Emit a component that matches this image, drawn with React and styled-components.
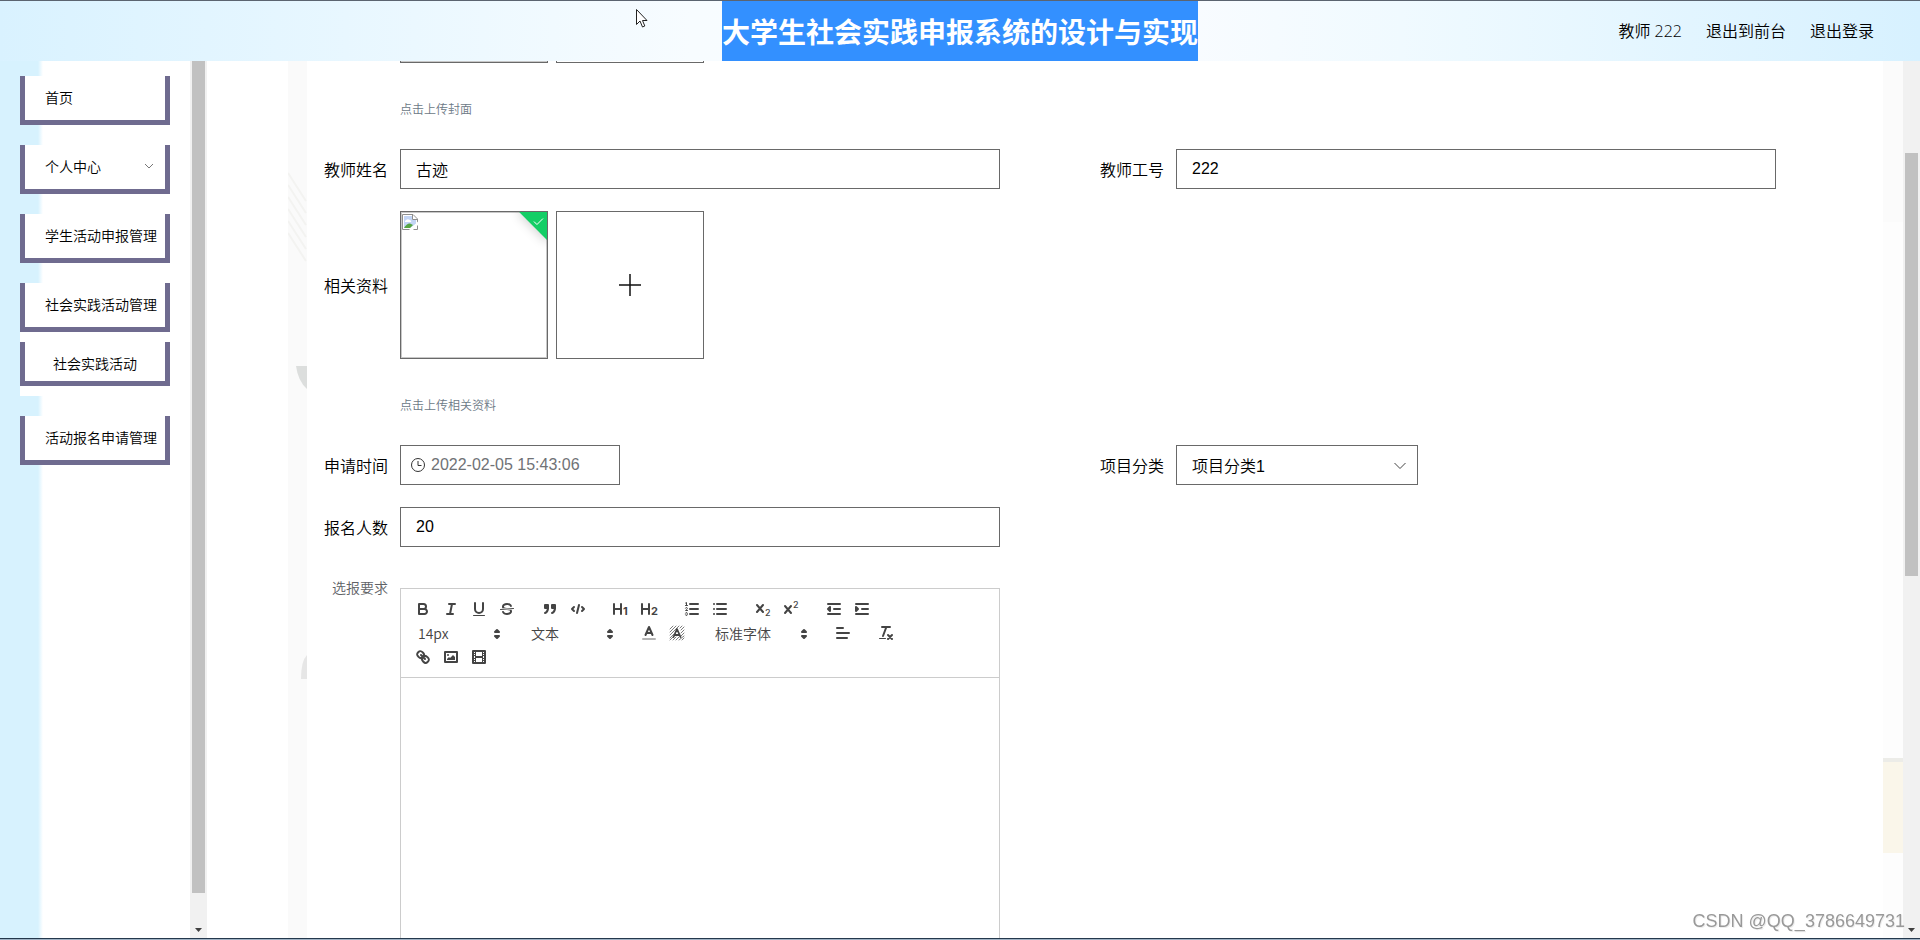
import React from 'react';
import styled, { createGlobalStyle, css } from 'styled-components';

const Global = createGlobalStyle`
  *, *::before, *::after { box-sizing: border-box; }
  body {
    margin: 0;
    background: #fff;
    color: #000;
    font-family: "Noto Sans CJK SC", "Liberation Sans", sans-serif;
    font-weight: 350;
  }
  button, input, select { font: inherit; color: inherit; }
`;

const Shell = styled.div`
  height: 100vh;
  display: flex;
  flex-direction: column;
  overflow: hidden;
  border-top: 1px solid #5b6470;
`;

const Header = styled.header`
  flex: none;
  height: 60px;
  display: grid;
  grid-template-columns: 1fr auto 1fr;
  align-items: center;
  background: linear-gradient(90deg, #d9f2ff 0%, #f7fcff 36%, #fafcff 60%, #f0faff 73%, #d7f1ff 100%);
`;

const Title = styled.h1`
  grid-column: 2;
  margin: 0;
  background: #3390ff;
  color: #fff;
  font-size: 28px;
  font-weight: 700;
  line-height: 60px;
  white-space: nowrap;
`;

const UserNav = styled.nav`
  display: flex;
  justify-content: flex-end;
  gap: 24px;
  padding-right: 46px;
  font-family: "Open Sans", "Noto Sans CJK SC", sans-serif;
  font-size: 16px;
  line-height: 60px;
  white-space: nowrap;
`;

const NavLink = styled.a`
  color: #000;
  text-decoration: none;
`;

const Body = styled.div`
  flex: 1;
  min-height: 0;
  display: flex;
`;

const Sidebar = styled.nav`
  flex: none;
  width: 190px;
  padding: 15px 20px;
  background: linear-gradient(90deg, #d7f2fe 0, #d7f2fe 38px, #fff 43px);
`;

const MenuList = styled.ul`
  list-style: none;
  margin: 0;
  padding: 0;
`;

const MenuItem = styled.li`
  margin-bottom: 20px;
  background: #fff;
`;

const frame = css`
  width: 150px;
  border: 5px solid #6f6b8f;
  border-top: 0;
  background: #fff;
  color: #000;
  font-size: 14px;
  text-decoration: none;
  white-space: nowrap;
`;

const MenuLink = styled.a`
  ${frame}
  display: flex;
  align-items: center;
  justify-content: space-between;
  height: 49px;
  padding: 0 10px 2px 20px;
`;

const SubMenu = styled.ul`
  list-style: none;
  margin: 0;
  padding: 10px 0;
`;

const SubLink = styled.a`
  ${frame}
  display: block;
  height: 44px;
  padding-left: 28px;
  line-height: 42px;
`;

const ScrollTrack = styled.div`
  flex: none;
  width: 17px;
  padding: 0 2px;
  display: flex;
  flex-direction: column;
  background: #f1f1f1;
`;

const ScrollGap = styled.div`
  flex: ${(p) => p.$size} 0 0;
`;

const ScrollThumb = styled.div`
  flex: ${(p) => p.$size} 0 0;
  background: #c1c1c1;
`;

const ScrollArrow = styled.svg`
  flex: none;
  width: 13px;
  height: 17px;
  fill: #404040;
`;

const Main = styled.main`
  flex: 1;
  min-width: 0;
  overflow: hidden;
  padding-left: 81px;
  display: flex;
`;

const Backdrop = styled.svg`
  flex: none;
  width: ${(p) => p.$width}px;
  height: 878px;
`;

const Form = styled.form`
  flex: 1;
  min-width: 0;
  padding: 0 11px 0 13px;
  display: grid;
  grid-template-columns: 1fr 1fr;
  align-content: start;
  row-gap: 22px;
  overflow: hidden;
`;

const Field = styled.div`
  grid-column: ${(p) => (p.$wide ? '1 / -1' : 'auto')};
  display: flex;
  align-items: flex-start;
`;

const Label = styled.label`
  flex: none;
  width: 80px;
  padding-right: 12px;
  text-align: right;
  white-space: nowrap;
  font-size: ${(p) => (p.$muted ? 14 : 16)}px;
  line-height: ${(p) => p.$line || 40}px;
  color: ${(p) => (p.$muted ? '#606266' : '#000')};
`;

const controlBox = css`
  height: 40px;
  border: 1px solid #696969;
  border-radius: 0;
  background: #fff;
  font-family: "Liberation Sans", "Noto Sans CJK SC", sans-serif;
  font-size: 16px;
  outline: 0;
`;

const TextInput = styled.input`
  ${controlBox}
  width: 600px;
  padding: 0 15px;
`;

const DateBox = styled.div`
  ${controlBox}
  width: 220px;
  display: flex;
  align-items: center;
  gap: 5px;
  padding-left: 10px;
  color: #707276;
`;

const DateInput = styled.input`
  flex: 1;
  min-width: 0;
  padding: 0;
  border: 0;
  outline: 0;
  background: none;
`;

const SelectBox = styled.div`
  ${controlBox}
  width: 242px;
  display: grid;
  align-items: center;
`;

const Select = styled.select`
  grid-area: 1 / 1;
  appearance: none;
  width: 100%;
  height: 38px;
  padding: 2px 30px 0 15px;
  border: 0;
  outline: 0;
  background: none;
`;

const SelectArrow = styled.svg`
  grid-area: 1 / 1;
  justify-self: end;
  margin-right: 10px;
  pointer-events: none;
`;

const Tiles = styled.div`
  display: flex;
  gap: 8px;
`;

const ScrolledTiles = styled(Tiles)`
  height: 2px;
  align-items: flex-end;
  overflow: hidden;
`;

const Tile = styled.div`
  flex: none;
  position: relative;
  width: 148px;
  height: 148px;
  padding: 2px 1px;
  border: 1px solid #696969;
  box-shadow: inset 0 0 0 1px #c8c8c8;
  background: #fff;
  overflow: hidden;
`;

const AddTile = styled.button`
  flex: none;
  width: 148px;
  height: 148px;
  padding: 0;
  display: flex;
  align-items: center;
  justify-content: center;
  border: 1px solid #696969;
  background: #fff;
`;

const DoneFlag = styled.span`
  position: absolute;
  top: -6px;
  right: -15px;
  width: 40px;
  height: 24px;
  display: flex;
  justify-content: center;
  padding-top: 11px;
  background: #13ce66;
  box-shadow: 0 0 12px 1px rgba(0, 0, 0, 0.2);
  transform: rotate(45deg);
  svg { transform: rotate(-45deg); }
`;

const Hint = styled.p`
  margin: 28px 0 0;
  color: #6c7986;
  font-size: 12px;
  line-height: 36px;
`;

const Editor = styled.div`
  width: 600px;
  margin-top: 19px;
  border: 1px solid #ccc;
`;

const Toolbar = styled.div`
  display: flex;
  flex-wrap: wrap;
  padding: 8px;
  border-bottom: 1px solid #ccc;
  color: #444;
`;

const Group = styled.span`
  display: flex;
  height: 24px;
  margin-right: 15px;
`;

const Tool = styled.button`
  width: 28px;
  height: 24px;
  padding: 3px 5px;
  border: 0;
  background: none;
  svg { display: block; }
`;

const Picker = styled.span`
  display: grid;
  align-items: center;
  width: ${(p) => p.$width}px;
`;

const PickerSelect = styled.select`
  grid-area: 1 / 1;
  appearance: none;
  width: 100%;
  height: 24px;
  padding: 0 20px 0 9px;
  border: 0;
  outline: 0;
  background: none;
  font-size: 14px;
`;

const PickerArrow = styled.span`
  grid-area: 1 / 1;
  justify-self: end;
  height: 18px;
  margin-right: 1px;
  pointer-events: none;
`;

const EditArea = styled.div`
  min-height: 400px;
  outline: 0;
`;

const BottomEdge = styled.footer`
  flex: none;
  height: 2px;
  border-top: 1px solid #24384c;
  background: #9fb2c4;
`;

const Watermark = styled.div`
  position: fixed;
  right: 15px;
  bottom: 7px;
  color: #999;
  font-family: "Liberation Sans", sans-serif;
  font-size: 18px;
  font-weight: 400;
  line-height: 24px;
  text-shadow: 1px 1px 0 #eee;
`;

const Cursor = styled.svg`
  position: fixed;
  top: 8px;
  left: 635px;
`;

const Ico = ({ children }) => (
  <svg width="18" height="18" viewBox="0 0 18 18" fill="none" stroke="#444" strokeWidth="2" strokeLinecap="round" strokeLinejoin="round" aria-hidden="true">
    {children}
  </svg>
);
const solid = { fill: '#444', stroke: 'none' };
const glyph = { ...solid, fontFamily: 'Inter, sans-serif', fontWeight: 700 };

const ICONS = {
  bold: <><path d="M5,4H9.5A2.5,2.5,0,0,1,12,6.5v0A2.5,2.5,0,0,1,9.5,9H5V4Z" /><path d="M5,9h5.5A2.5,2.5,0,0,1,13,11.5v0A2.5,2.5,0,0,1,10.5,14H5V9Z" /></>,
  italic: <path d="M7,4H13M5,14H11M8,14L10,4" />,
  underline: <><path d="M5,3V9a4,4,0,0,0,8,0V3" /><rect x="3" y="15" width="12" height="1" rx="0.5" {...solid} /></>,
  strike: <><path d="M15.5,8.5L2.5,9.5" strokeWidth="1" /><path {...solid} d="M9.007,8C6.542,7.791,6,7.519,6,6.5,6,5.792,7.283,5,9,5c1.571,0,2.765.679,2.969,1.309a1,1,0,0,0,1.9-.617C13.356,4.106,11.354,3,9,3,6.2,3,4,4.538,4,6.5a3.2,3.2,0,0,0,.5,1.843Z" /><path {...solid} d="M8.984,10C11.457,10.208,12,10.479,12,11.5c0,.708-1.283,1.5-3,1.5-1.571,0-2.765-.679-2.969-1.309a1,1,0,1,0-1.9.617C4.644,13.894,6.646,15,9,15c2.8,0,5-1.538,5-3.5a3.2,3.2,0,0,0-.5-1.843Z" /></>,
  quote: <><rect x="4" y="5" width="3" height="3" fill="#444" /><rect x="11" y="5" width="3" height="3" fill="#444" /><path fill="#444" d="M7,8c0,4.031-3,5-3,5" /><path fill="#444" d="M14,8c0,4.031-3,5-3,5" /></>,
  code: <path d="M5,7L3,9L5,11M13,7L15,9L13,11M10,5L8,13" />,
  h1: <><path d="M2,4V14M9,4V14M2,9H9" /><text x="11" y="15" fontSize="11" {...glyph}>1</text></>,
  h2: <><path d="M2,4V14M9,4V14M2,9H9" /><text x="11" y="15" fontSize="11" {...glyph}>2</text></>,
  ordered: <><path d="M7,4H15M7,9H15M7,14H15" /><path strokeWidth="1" d="M2.5,5.5H4.5M3.5,5.5V2.5L2.6,3M4.5,10.5h-2c0-.234,1.85-1.076,1.85-2.234A0.959,0.959,0,0,0,2.5,8.156M2.5,14.846a0.959,0.959,0,0,0,1.85-.109A0.7,0.7,0,0,0,3.75,14a0.688,0.688,0,0,0,.6-0.736,0.959,0.959,0,0,0-1.85-.109" /></>,
  bullet: <path d="M6,4H15M6,9H15M6,14H15M3,4H3.01M3,9H3.01M3,14H3.01" />,
  sub: <><path d="M3,5L9,12M9,5L3,12" /><text x="11" y="16" fontSize="9" {...glyph} fontWeight="500">2</text></>,
  sup: <><path d="M3,6L9,13M9,6L3,13" /><text x="11" y="8" fontSize="9" {...glyph} fontWeight="500">2</text></>,
  outdent: <><path d="M3,14H15M3,4H15M9,9H15" /><path fill="#444" d="M5,7V11L3,9Z" /></>,
  indent: <><path d="M3,14H15M3,4H15M9,9H15" /><path fill="#444" d="M3,7V11L5,9Z" /></>,
  color: <><path d="M3,15H15" opacity="0.4" /><path d="M5.5,11L9,3L12.5,11M6.4,9H11.6" /></>,
  background: <><path strokeWidth="0.7" d="M2,5L5,2M2,8L8,2M2,11L11,2M2,14L6,10M12,4L14,2M2,16L6,12M13,6L16,3M5,16L8,13M13,9L16,6M8,16L11,13M13,12L16,9M11,16L16,12M14,16L16,14" /><path strokeWidth="1.8" d="M5.5,13L9,5L12.5,13M6.4,11H11.6" /></>,
  align: <path d="M3,9H15M3,14H13M3,4H9" />,
  clean: <><path d="M5,3H13M6,12L9.35,3M11,11L15,15M15,11L11,15" /><rect x="2" y="14" width="7" height="1" rx="0.5" {...solid} /></>,
  link: <path d="M7,7L11,11M8.9,4.577a3.476,3.476,0,0,1,.36,4.679A3.476,3.476,0,0,1,4.577,8.9C3.185,7.5,2.035,6.4,4.217,4.217S7.5,3.185,8.9,4.577ZM13.423,9.1a3.476,3.476,0,0,0-4.679-.36,3.476,3.476,0,0,0,.36,4.679c1.392,1.392,2.5,2.542,4.679.36S14.815,10.5,13.423,9.1Z" />,
  image: <><rect x="3" y="4" width="12" height="10" /><circle cx="6" cy="7" r="1" {...solid} /><polygon {...solid} points="5 12 5 11 7 9 8 10 11 7 13 9 13 12" /></>,
  video: <><rect x="3" y="3" width="12" height="12" /><path {...solid} d="M5,3h1v12h-1zM12,3h1v12h-1zM5,8h8v2h-8zM3,5h3v1h-3zM3,7h3v1h-3zM3,10h3v1h-3zM3,12h3v1h-3zM12,5h3v1h-3zM12,7h3v1h-3zM12,10h3v1h-3zM12,12h3v1h-3z" /></>,
};

const Tools = ({ names }) => (
  <Group>
    {names.map((n) => (
      <Tool key={n} type="button" aria-label={n}><Ico>{ICONS[n]}</Ico></Tool>
    ))}
  </Group>
);

const FormatPicker = ({ label, value, width }) => (
  <Group>
    <Picker $width={width}>
      <PickerSelect aria-label={label} defaultValue={value}><option>{value}</option></PickerSelect>
      <PickerArrow>
        <Ico><polygon fill="#444" points="7 11 9 13 11 11" /><polygon fill="#444" points="7 7 9 5 11 7" /></Ico>
      </PickerArrow>
    </Picker>
  </Group>
);

const Chevron = ({ size }) => (
  <svg width={size} height={size} viewBox="0 0 12 12" fill="none" stroke="#777" aria-hidden="true">
    <path d="M2,4L6,8L10,4" />
  </svg>
);

const BrokenImage = () => (
  <svg width="16" height="16" viewBox="0 0 16 16" display="block" role="img" aria-label="image">
    <path d="M0.5,0.5H11L15.5,5V15.5H0.5Z" fill="#fff" stroke="#8e8e8e" />
    <path d="M2,2H10V6H14V10L8,14H2Z" fill="#c3d5f5" />
    <path d="M3,7Q5,4 8,6Q10,7 9,8H3Z" fill="#fff" />
    <path d="M2,14Q5,9 8,9.5L11,11L8,14Z" fill="#55a542" />
    <path d="M7,16L16,7.5V11L11,16Z" fill="#fff" />
    <path d="M10.5,1V5.5H15" fill="#fff" stroke="#8e8e8e" />
  </svg>
);

const PlusIcon = () => (
  <svg width="28" height="28" viewBox="0 0 28 28" stroke="#111" strokeWidth="1.5" aria-hidden="true">
    <path d="M3,14H25M14,3V25" />
  </svg>
);

const ClockIcon = () => (
  <svg width="15" height="16" viewBox="0 0 15 16" fill="none" stroke="#333" aria-hidden="true">
    <circle cx="7" cy="8" r="6.5" />
    <path d="M7,4V8.5H10.5" />
  </svg>
);

const Scrollbar = ({ before, thumb, after }) => (
  <ScrollTrack>
    <ScrollGap $size={before} />
    <ScrollThumb $size={thumb} />
    <ScrollGap $size={after} />
    <ScrollArrow viewBox="0 0 13 17"><path d="M3,7H10L6.5,11Z" /></ScrollArrow>
  </ScrollTrack>
);

const MENU = [
  { text: '首页' },
  { text: '个人中心', folded: true },
  { text: '学生活动申报管理' },
  { text: '社会实践活动管理', children: ['社会实践活动'] },
  { text: '活动报名申请管理' },
];

export default function App() {
  return (
    <>
      <Global />
      <Shell>
        <Header>
          <Title>大学生社会实践申报系统的设计与实现</Title>
          <UserNav>
            <span>教师 222</span>
            <NavLink href="#front">退出到前台</NavLink>
            <NavLink href="#logout">退出登录</NavLink>
          </UserNav>
        </Header>
        <Body>
          <Sidebar>
            <MenuList>
              {MENU.map((m) => (
                <MenuItem key={m.text}>
                  <MenuLink href="#menu">
                    {m.text}
                    {m.folded && <Chevron size={12} />}
                  </MenuLink>
                  {m.children && (
                    <SubMenu>
                      {m.children.map((c) => <li key={c}><SubLink href="#sub">{c}</SubLink></li>)}
                    </SubMenu>
                  )}
                </MenuItem>
              ))}
            </MenuList>
          </Sidebar>
          <Scrollbar before={0} thumb={832} after={28} />
          <Main>
            <Backdrop $width={19} viewBox="0 0 19 878" aria-hidden="true">
              <rect width="19" height="878" fill="#fafafa" />
              <path d="M0,112L18,140M0,124L18,152M0,136L18,164M0,148L18,176M0,160L18,188M0,172L18,200" stroke="#f3f3f1" strokeWidth="2" />
              <path d="M8,305H19V328Q10,320 8,305Z" fill="#dcdedd" />
              <path d="M13,618Q13,600 19,594V618Z" fill="#e6e6e6" />
            </Backdrop>
            <Form onSubmit={(e) => e.preventDefault()}>
              <Field $wide>
                <Label as="span" $line={2} />
                <div>
                  <ScrolledTiles><Tile /><AddTile type="button" aria-label="upload" /></ScrolledTiles>
                  <Hint>点击上传封面</Hint>
                </div>
              </Field>
              <Field>
                <Label htmlFor="name">教师姓名</Label>
                <TextInput id="name" defaultValue="古迹" />
              </Field>
              <Field>
                <Label htmlFor="number">教师工号</Label>
                <TextInput id="number" defaultValue="222" />
              </Field>
              <Field $wide>
                <Label as="span" $line={148}>相关资料</Label>
                <div>
                  <Tiles>
                    <Tile>
                      <BrokenImage />
                      <DoneFlag>
                        <svg width="12" height="12" viewBox="0 0 12 12" fill="none" stroke="#fff" aria-hidden="true"><path d="M1.5,6L4.5,9L10.5,3" /></svg>
                      </DoneFlag>
                    </Tile>
                    <AddTile type="button" aria-label="upload"><PlusIcon /></AddTile>
                  </Tiles>
                  <Hint>点击上传相关资料</Hint>
                </div>
              </Field>
              <Field>
                <Label htmlFor="time">申请时间</Label>
                <DateBox>
                  <ClockIcon />
                  <DateInput id="time" defaultValue="2022-02-05 15:43:06" />
                </DateBox>
              </Field>
              <Field>
                <Label htmlFor="category">项目分类</Label>
                <SelectBox>
                  <Select id="category" defaultValue="项目分类1"><option>项目分类1</option></Select>
                  <SelectArrow width="14" height="14" viewBox="0 0 14 14" fill="none" stroke="#444"><path d="M1.5,5L7,10.5L12.5,5" /></SelectArrow>
                </SelectBox>
              </Field>
              <Field $wide>
                <Label htmlFor="count">报名人数</Label>
                <TextInput id="count" defaultValue="20" />
              </Field>
              <Field $wide>
                <Label as="span" $muted $line={36} id="rules">选报要求</Label>
                <Editor>
                  <Toolbar>
                    <Tools names={['bold', 'italic', 'underline', 'strike']} />
                    <Tools names={['quote', 'code']} />
                    <Tools names={['h1', 'h2']} />
                    <Tools names={['ordered', 'bullet']} />
                    <Tools names={['sub', 'sup']} />
                    <Tools names={['outdent', 'indent']} />
                    <FormatPicker label="size" value="14px" width={98} />
                    <FormatPicker label="header" value="文本" width={98} />
                    <Tools names={['color', 'background']} />
                    <FormatPicker label="font" value="标准字体" width={108} />
                    <Tools names={['align']} />
                    <Tools names={['clean']} />
                    <Tools names={['link', 'image', 'video']} />
                  </Toolbar>
                  <EditArea contentEditable suppressContentEditableWarning role="textbox" aria-labelledby="rules" />
                </Editor>
              </Field>
            </Form>
            <Backdrop $width={20} viewBox="0 0 20 878" aria-hidden="true">
              <rect width="20" height="161" fill="#fbfbfb" />
              <rect y="161" width="20" height="717" fill="#fdfdfd" />
              <rect y="697" width="20" height="95" fill="#faf6ea" />
              <rect y="697" width="20" height="4" fill="#ecece8" />
            </Backdrop>
          </Main>
          <Scrollbar before={92} thumb={423} after={345} />
        </Body>
        <BottomEdge />
      </Shell>
      <Watermark>CSDN @QQ_3786649731</Watermark>
      <Cursor width="14" height="21" viewBox="0 0 14 21" fill="#fff" stroke="#222" aria-hidden="true">
        <path d="M1.5,1.5V16.5L5,13L7.5,19L9.8,18L7.5,12.5H12Z" />
      </Cursor>
    </>
  );
}
